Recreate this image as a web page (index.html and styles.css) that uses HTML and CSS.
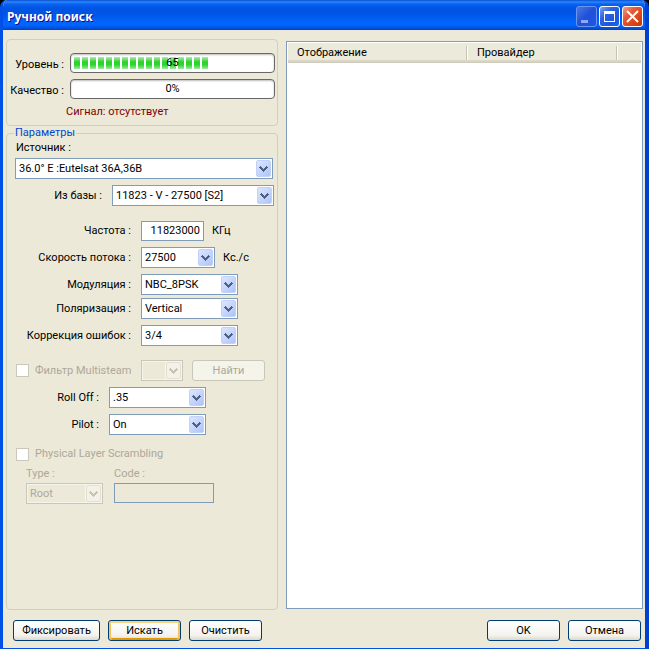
FILE: index.html
```html
<!DOCTYPE html>
<html lang="ru">
<head>
<meta charset="utf-8">
<title>Ручной поиск</title>
<link rel="stylesheet" href="styles.css">
</head>
<body>
<svg class="symbols" aria-hidden="true">
  <symbol id="chevron" viewBox="0 0 9 6"><path d="M1 0H2V1H3V2H4V3H5V2H6V1H7V0H8V1H9V2H8V3H7V4H6V5H5V6H4V5H3V4H2V3H1V2H0V1H1Z"/></symbol>
</svg>
<div class="window">
  <header class="titlebar">
    <h1>Ручной поиск</h1>
    <div class="controls">
      <button class="control minimize" type="button" aria-label="Свернуть"><svg viewBox="0 0 21 21"><path d="M5 14h7v3H5z"/></svg></button>
      <button class="control" type="button" aria-label="Развернуть"><svg viewBox="0 0 21 21"><path fill-rule="evenodd" d="M5 5h11v11H5zM6 8v7h9V8z"/></svg></button>
      <button class="control close" type="button" aria-label="Закрыть"><svg viewBox="0 0 21 21"><path class="cross" d="M5 5l11 11M16 5L5 16"/></svg></button>
    </div>
  </header>
  <main class="content">
    <div class="settings">
      <section class="signal">
        <span class="meter-label" id="level">Уровень :</span>
        <div class="meter" role="progressbar" aria-labelledby="level" aria-valuenow="65"><div class="meter-fill" style="width: 68%"></div><span class="meter-value">65</span></div>
        <span class="meter-label" id="quality">Качество :</span>
        <div class="meter" role="progressbar" aria-labelledby="quality" aria-valuenow="0"><span class="meter-value">0%</span></div>
        <p class="status">Сигнал: отсутствует</p>
      </section>
      <fieldset class="params">
        <legend>Параметры</legend>
        <label class="source-label" for="source">Источник :</label>
        <div class="combo source"><select id="source"><option>36.0° E :Eutelsat 36A,36B</option></select><span class="arrow"><svg><use href="#chevron"/></svg></span></div>
        <div class="row base">
          <label for="base">Из базы :</label>
          <div class="combo wide"><select id="base"><option>11823 - V - 27500 [S2]</option></select><span class="arrow"><svg><use href="#chevron"/></svg></span></div>
        </div>
        <div class="row main spaced">
          <label for="freq">Частота :</label>
          <input class="freq" id="freq" type="text" value="11823000"><span class="unit">КГц</span>
        </div>
        <div class="row main">
          <label for="rate">Скорость потока :</label>
          <div class="combo rate"><select id="rate"><option>27500</option></select><span class="arrow"><svg><use href="#chevron"/></svg></span></div><span class="unit">Кс./с</span>
        </div>
        <div class="row main">
          <label for="modulation">Модуляция :</label>
          <div class="combo"><select id="modulation"><option>NBC_8PSK</option></select><span class="arrow"><svg><use href="#chevron"/></svg></span></div>
        </div>
        <div class="row main tight">
          <label for="polar">Поляризация :</label>
          <div class="combo"><select id="polar"><option>Vertical</option></select><span class="arrow"><svg><use href="#chevron"/></svg></span></div>
        </div>
        <div class="row main">
          <label for="fec">Коррекция ошибок :</label>
          <div class="combo"><select id="fec"><option>3/4</option></select><span class="arrow"><svg><use href="#chevron"/></svg></span></div>
        </div>
        <div class="row filter spaced">
          <label class="check"><input type="checkbox" disabled>Фильтр Multisteam</label>
          <div class="combo stream off"><select aria-label="Поток" disabled></select><span class="arrow"><svg><use href="#chevron"/></svg></span></div>
          <button class="button find" type="button" disabled>Найти</button>
        </div>
        <div class="row short">
          <label for="rolloff">Roll Off :</label>
          <div class="combo"><select id="rolloff"><option>.35</option></select><span class="arrow"><svg><use href="#chevron"/></svg></span></div>
        </div>
        <div class="row short">
          <label for="pilot">Pilot :</label>
          <div class="combo"><select id="pilot"><option>On</option></select><span class="arrow"><svg><use href="#chevron"/></svg></span></div>
        </div>
        <label class="check scrambling"><input type="checkbox" disabled>Physical Layer Scrambling</label>
        <div class="codes">
          <label for="type">Type :</label>
          <label for="code">Code :</label>
          <div class="combo off"><select id="type" disabled><option>Root</option></select><span class="arrow"><svg><use href="#chevron"/></svg></span></div>
          <input class="code" id="code" type="text" disabled>
        </div>
      </fieldset>
    </div>
    <div class="list">
      <table>
        <thead><tr><th class="name">Отображение</th><th class="provider">Провайдер</th><th></th></tr></thead>
      </table>
    </div>
  </main>
  <footer class="actions">
    <button class="button lock" type="button">Фиксировать</button>
    <button class="button default" type="button">Искать</button>
    <button class="button" type="button">Очистить</button>
    <button class="button ok" type="button">OK</button>
    <button class="button" type="button">Отмена</button>
  </footer>
</div>
</body>
</html>
```
FILE: styles.css
```css
* { box-sizing: border-box; }

body {
  margin: 0;
  background: #000;
  color: #000;
  font: 11px/16px Roboto, "Liberation Sans", sans-serif;
}

button, input, select { font: inherit; color: inherit; margin: 0; }

.symbols { position: absolute; width: 0; height: 0; }

.window {
  display: flex;
  flex-direction: column;
  min-height: 100vh;
  overflow: hidden;
  background: #ece9d8;
  border: solid #0054e3;
  border-width: 0 4px 1px 3px;
  border-left-color: #0050e8;
  border-right-color: #0040d0;
  border-radius: 7px 7px 0 0;
}

.titlebar {
  display: flex;
  justify-content: space-between;
  align-items: center;
  height: 30px;
  margin: 0 -4px 0 -3px;
  padding: 3px 6px 0 7px;
  background: linear-gradient(#0a50d0 0, #2b86ff 2px, #0a62ef 4px, #0054e3 8px, #0055e5 14px, #0064fb 21px, #0066ff 25px, #0052e0 28px, #0040c8 30px);
}

.titlebar h1 {
  margin: 0;
  color: #fff;
  font: bold 12px/18px "Noto Sans", "Open Sans", sans-serif;
  text-shadow: 1px 1px 0 #0f1089;
}

.controls { display: flex; gap: 2px; }

.control {
  width: 21px;
  height: 21px;
  padding: 0;
  border: 1px solid #fff;
  border-radius: 3px;
  background: linear-gradient(135deg, #7ea2f0, #2e62e0 35%, #1f56dc 70%, #1a66f5);
}

.control svg { display: block; width: 21px; height: 21px; margin: -1px; fill: #fff; }
.minimize { border-color: #6f94ec; background: linear-gradient(135deg, #4a78e8, #2050d8 50%, #1c58e4); }
.minimize svg { fill: #90a8ee; }
.close { background: linear-gradient(135deg, #f0a088, #e25a38 35%, #da4418 70%, #c03808); }
.cross { stroke: #fff; stroke-width: 2; }

.content {
  flex: 1;
  display: grid;
  grid-template-columns: 272px 1fr;
  gap: 8px;
  padding: 9px 2px 0 3px;
}

.settings { display: flex; flex-direction: column; }

.signal {
  display: grid;
  grid-template-columns: 57px 1fr;
  grid-auto-rows: 20px;
  gap: 6px;
  height: 87px;
  padding: 13px 2px 0 0;
  border: 1px solid #d0d0bf;
  border-radius: 4px;
}

.meter-label { padding-top: 4px; text-align: right; white-space: nowrap; }

.meter {
  position: relative;
  padding: 3px;
  overflow: hidden;
  background: #fff;
  border: 1px solid #686868;
  border-radius: 4px;
  box-shadow: inset 0 1px 2px #bbb;
}

.meter-fill {
  height: 12px;
  background:
    repeating-linear-gradient(90deg, transparent 0 6px, #fff 6px 8px),
    linear-gradient(#aeeeb0, #2ed32e 40%, #2ed32e 65%, #a0eba2);
}

.meter-value { position: absolute; inset: 1px 0 0; text-align: center; }

.status { grid-column: 1 / -1; margin: -1px 0 0 59px; color: #800000; }

.params {
  flex: 1;
  min-width: 0;
  margin: 0;
  padding: 0 4px 0 8px;
  border: 1px solid #d0d0bf;
  border-radius: 4px;
}

.params legend { margin-left: -1px; padding: 0 1px; color: #0046d5; line-height: 14px; }

.source-label { display: block; margin-left: 1px; }

.combo { position: relative; height: 21px; }

.combo select {
  appearance: none;
  display: block;
  width: 100%;
  height: 100%;
  padding: 0 18px 0 3px;
  background: #fff;
  border: 1px solid #7f9db9;
  border-radius: 0;
}

.arrow {
  position: absolute;
  inset: 2px 2px 2px auto;
  display: grid;
  place-items: center;
  width: 15px;
  background: linear-gradient(135deg, #dce6fd, #c6d5fc 50%, #aec4f6);
  border: 1px solid #c2d1f7;
  border-radius: 2px;
  pointer-events: none;
}

.arrow svg { width: 9px; height: 6px; fill: #4d6185; }

.off select { background: #ece9d8; border-color: #c9c7ba; color: #aca899; box-shadow: inset 0 0 0 1px #f5f4ea; opacity: 1; }
.off .arrow { background: #f3f1e8; border-color: #e2dfd0; box-shadow: 0 0 0 1px #f7f6ee; }
.off .arrow svg { fill: #c6c3b3; }

.source { width: 258px; margin: 2px 0 0; }

.row { display: grid; align-items: center; height: 21px; margin-top: 6px; }
.row > label:not(.check) { padding-right: 10px; text-align: right; white-space: nowrap; }
.spaced { margin-top: 14px; }
.tight { margin-top: 3px; }
.base { grid-template-columns: 97px 162px; }
.main { grid-template-columns: 126px auto 1fr; }
.main .combo { width: 97px; }
.main .rate { width: 74px; }
.short { grid-template-columns: 94px 97px; }
.filter { grid-template-columns: 126px 42px 82px; }
.filter .find { margin-left: 9px; }

.freq {
  width: 63px;
  height: 20px;
  padding: 0 3px;
  border: 1px solid #7f9db9;
  text-align: right;
}

.unit { margin-left: 8px; }

.check { display: flex; align-items: center; gap: 6px; color: #aca899; white-space: nowrap; }

.check input {
  appearance: none;
  width: 13px;
  height: 13px;
  margin-left: 1px;
  background: #fff;
  border: 1px solid #cac8bb;
}

.scrambling { margin-top: 11px; }

.codes {
  display: grid;
  grid-template-columns: 77px 100px;
  column-gap: 11px;
  margin: 4px 0 0 11px;
  color: #aca899;
}

.codes .combo, .code { margin-top: 1px; }
.code { width: 100%; height: 20px; background: #ece9d8; border: 1px solid #7f9db9; }

.list {
  margin: 2px 0 1px;
  padding: 1px;
  background: #fff;
  border: 1px solid #7f9db9;
}

table { width: 100%; border-collapse: collapse; table-layout: fixed; }

th {
  height: 20px;
  padding: 0 0 0 9px;
  background:
    linear-gradient(#c5c2b2, #c5c2b2) right 1px center / 1px 14px no-repeat,
    linear-gradient(#fff, #fff) right center / 1px 14px no-repeat,
    linear-gradient(#ebeadb 17px, #dedbcb 17px, #d6d2c2 19px, #cbc7b8 20px);
  font-weight: normal;
  text-align: left;
}

th:last-child { background: linear-gradient(#ebeadb 17px, #dedbcb 17px, #d6d2c2 19px, #cbc7b8 20px); }
.name { width: 180px; }
.provider { width: 150px; }

.actions {
  display: flex;
  gap: 8px;
  padding: 10px 4px 7px 10px;
}

.button {
  width: 73px;
  height: 21px;
  padding: 0;
  background: linear-gradient(#fff, #f4f3ee 75%, #dcd8cb);
  border: 1px solid #003c74;
  border-radius: 3px;
}

.lock { width: 87px; }
.default { box-shadow: inset 0 2px #fad47c, inset 2px 0 #f9c35a, inset -2px 0 #f9c35a, inset 0 -2px #e59700; }
.ok { margin-left: auto; }
.find { background: #f5f4ea; border-color: #c9c7ba; color: #aca899; }
```
